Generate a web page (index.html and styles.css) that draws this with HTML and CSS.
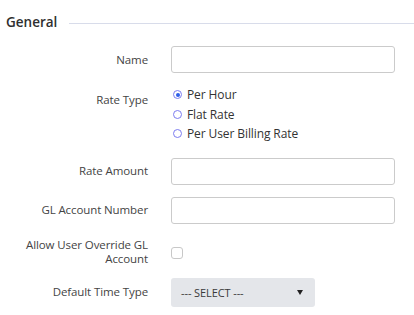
FILE: index.html
```html
<!DOCTYPE html>
<html>
<head>
<meta charset="utf-8">
<link rel="stylesheet" href="styles.css">
</head>
<body>
<div class="section">
  <div class="legend"><span class="legend-text">General</span><span class="legend-line"></span></div>
  <div class="row">
    <div class="label">Name</div>
    <div class="control"><input class="text-input" type="text"></div>
  </div>
  <div class="row row-radio">
    <div class="label label-radio">Rate Type</div>
    <div class="control radios">
      <label class="radio"><span class="radio-dot checked"></span>Per Hour</label>
      <label class="radio"><span class="radio-dot"></span>Flat Rate</label>
      <label class="radio"><span class="radio-dot"></span>Per User Billing Rate</label>
    </div>
  </div>
  <div class="row">
    <div class="label">Rate Amount</div>
    <div class="control"><input class="text-input" type="text"></div>
  </div>
  <div class="row row-gl">
    <div class="label">GL Account Number</div>
    <div class="control"><input class="text-input" type="text"></div>
  </div>
  <div class="row">
    <div class="label label-multi">Allow User Override GL Account</div>
    <div class="control"><span class="checkbox"></span></div>
  </div>
  <div class="row">
    <div class="label">Default Time Type</div>
    <div class="control"><div class="select"><span>--- SELECT ---</span><span class="caret"></span></div></div>
  </div>
</div>
</body>
</html>
```
FILE: styles.css
```css
html, body { margin: 0; padding: 0; background: #fff; }
body { font-family: "Open Sans", "Noto Sans", sans-serif; font-size: 11.5px; letter-spacing: -0.1px; color: #444; }
.section { width: 414px; }
.legend { display: flex; align-items: center; padding: 14px 0 0 6px; height: 17px; margin-bottom: 15px; }
.legend-text { font-size: 13.5px; font-weight: 600; color: #2f2f2f; line-height: 17px; letter-spacing: 0; }
.legend-line { flex: 1; height: 1px; background: #d8dcea; margin-left: 12px; margin-top: 1px; }
.row { display: flex; align-items: center; margin-bottom: 12px; }
.row-radio { align-items: flex-start; margin-bottom: 14px; }
.row-gl { margin-bottom: 14px; }
.label { width: 148px; text-align: right; margin-right: 23px; line-height: 14px; color: #444; }
.label-radio { padding-top: 8px; }
.label-multi { width: 140px; margin-left: 8px; }
.text-input { box-sizing: border-box; width: 224px; height: 27px; border: 1px solid #cbcbcb; border-radius: 3px; margin: 0; padding: 0 6px; display: block; font: inherit; }
.radios { display: flex; flex-direction: column; }
.radio { display: flex; align-items: center; height: 19.5px; color: #333; font-size: 12px; }
.radio-dot { box-sizing: border-box; width: 9px; height: 9px; border: 1px solid #7c7cf0; border-radius: 50%; margin: 0 5px 0 2px; position: relative; }
.radio-dot.checked::after { content: ""; position: absolute; left: 1.5px; top: 1.5px; width: 4px; height: 4px; border-radius: 50%; background: #2f5fe8; }
.checkbox { display: block; box-sizing: border-box; width: 12px; height: 12px; border: 1px solid #c8c8c8; border-radius: 3px; margin-top: 2px; }
.select { box-sizing: border-box; width: 144px; height: 29px; background: #e4e6ea; border-radius: 3px; display: flex; align-items: center; justify-content: space-between; padding: 0 10px 0 10px; color: #3a3a3a; font-size: 11px; }
.caret { width: 0; height: 0; border-left: 3.5px solid transparent; border-right: 3.5px solid transparent; border-top: 5px solid #222; margin-right: 2px; }
```
